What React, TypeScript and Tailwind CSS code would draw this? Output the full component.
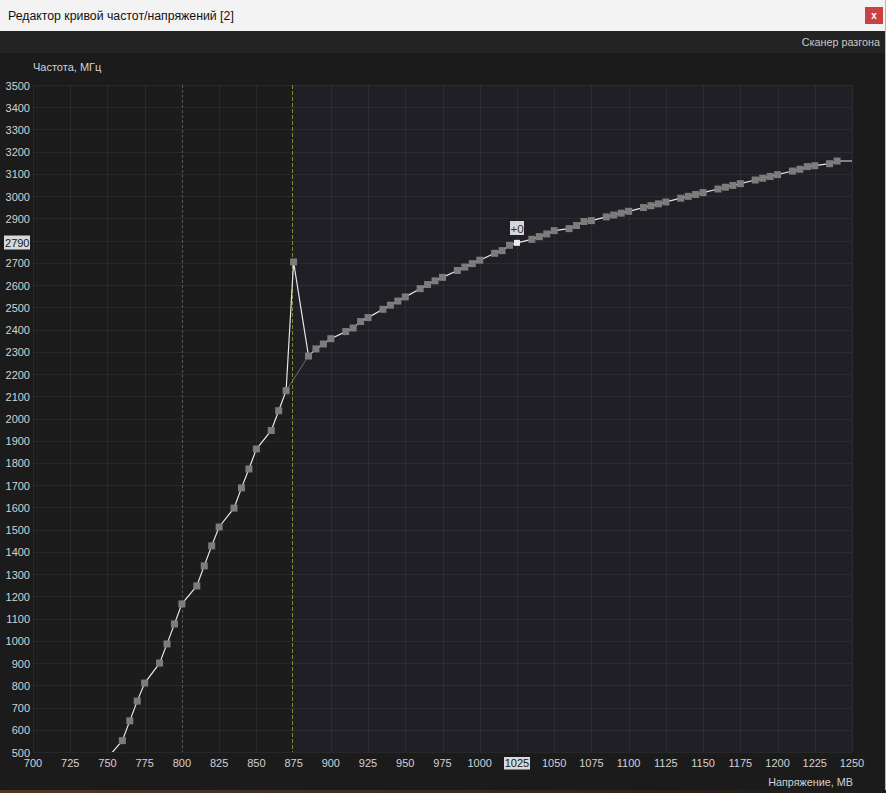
import React from "react";

const X = (v: number) => 33 + (v - 700) * (819 / 550);
const Y = (f: number) => 752 - (f - 500) * (667 / 3000);

const leftPts: [number, number][] = [
  [750, 473],
  [760, 551], [765, 640], [770, 729], [775, 810],
  [785, 900], [790, 986], [795, 1076], [800, 1166],
  [810, 1247], [815, 1337], [820, 1427], [825, 1512],
  [835, 1597], [840, 1688], [845, 1773], [850, 1863],
  [860, 1946], [865, 2035], [870, 2125],
];
const peak: [number, number] = [875, 2704];

const anchors: [number, number][] = [
  [885, 2281], [890, 2313], [895, 2335], [900, 2359], [910, 2391], [915, 2407],
  [920, 2436], [925, 2454], [967, 2610], [1010, 2743], [1015, 2755], [1020, 2779],
  [1025, 2790], [1035, 2806], [1040, 2818], [1045, 2830], [1050, 2845], [1060, 2854],
  [1065, 2868], [1070, 2886], [1075, 2890], [1150, 3016], [1210, 3113], [1215, 3121],
  [1220, 3133], [1225, 3137], [1235, 3146], [1240, 3158],
];

const interp = (v: number) => {
  for (let i = 0; i < anchors.length - 1; i++) {
    const [v0, f0] = anchors[i];
    const [v1, f1] = anchors[i + 1];
    if (v >= v0 && v <= v1) return f0 + ((v - v0) / (v1 - v0)) * (f1 - f0);
  }
  return anchors[anchors.length - 1][1];
};

const rightPts: [number, number][] = [];
for (let v = 885; v <= 1240; v += 5) {
  const m = v % 25;
  if (m === 10 || m === 15 || m === 20 || m === 0) rightPts.push([v, interp(v)]);
}

const all: [number, number][] = [...leftPts, peak, ...rightPts, [1250, 3158]];
const pathD = all.map(([v, f], i) => `${i === 0 ? "M" : "L"}${X(v).toFixed(1)},${Y(f).toFixed(1)}`).join(" ");

const yTicks: number[] = [];
for (let f = 500; f <= 3500; f += 100) yTicks.push(f);
const xTicks: number[] = [];
for (let v = 700; v <= 1250; v += 25) xTicks.push(v);

const px = (n: number) => Math.round(n) + 0.5;

const FONT = "Liberation Sans, Arial, sans-serif";

function Chart() {
  const sq = [...leftPts, peak, ...rightPts];
  return (
    <svg width={885} height={696} viewBox="0 76 885 696" className="block shrink-0" fontFamily={FONT}>
      <defs>
        <clipPath id="plotclip">
          <rect x={33} y={85} width={819} height={667} />
        </clipPath>
      </defs>
      <rect x={33} y={85} width={260} height={667} fill="#1c1c1d" />
      <rect x={293} y={85} width={559} height={667} fill="#1f1f25" />
      {xTicks.filter((v) => v !== 800 && v !== 875).map((v) => (
        <line key={"gx" + v} x1={px(X(v))} x2={px(X(v))} y1={85} y2={752} stroke="#ffffff" strokeOpacity={0.055} />
      ))}
      {yTicks.map((f) => (
        <line key={"gy" + f} x1={33} x2={852} y1={px(Y(f))} y2={px(Y(f))} stroke="#ffffff" strokeOpacity={0.055} />
      ))}
      <line x1={852.5} x2={852.5} y1={85} y2={752} stroke="#2b2b31" />
      <line x1={px(X(800))} x2={px(X(800))} y1={85} y2={752} stroke="#555555" strokeDasharray="3 2" />
      <line x1={292.5} x2={292.5} y1={85} y2={752} stroke="#84842a" strokeDasharray="4 2" shapeRendering="crispEdges" />
      <g clipPath="url(#plotclip)">
        <line x1={X(870)} y1={Y(2125)} x2={X(885)} y2={Y(2281)} stroke="#6e6e6e" strokeWidth={1} />
        <path d={pathD} fill="none" stroke="#e8e8e8" strokeWidth={1.2} />
        {sq.map(([v, f]) =>
          v === 1025 ? null : (
            <rect key={"p" + v} x={X(v) - 3.5} y={Y(f) - 3.5} width={7} height={7} fill="#7c7c7c" />
          )
        )}
        <rect x={X(1025) - 3} y={Y(2790) - 3} width={6} height={6} fill="#ececec" />
      </g>
      <rect x={510} y={221} width={14} height={14} fill="#d6d6d6" />
      <text x={517} y={228.5} fontSize={11.5} fill="#333333" textAnchor="middle" dominantBaseline="central">+0</text>
      {yTicks.filter((f) => f !== 2800).map((f) => (
        <text key={"ly" + f} x={30} y={Y(f) + 0.5} fontSize={11} fill="#d2d2d2" textAnchor="end" dominantBaseline="central">
          {f}
        </text>
      ))}
      <rect x={4} y={235.5} width={26} height={14} fill="#d9d9d9" />
      <text x={29.5} y={Y(2790) + 0.5} fontSize={11} fill="#151515" textAnchor="end" dominantBaseline="central">2790</text>
      {xTicks.map((v) =>
        v === 1025 ? null : (
          <text key={"lx" + v} x={X(v)} y={763} fontSize={11} fill="#d2d2d2" textAnchor="middle" dominantBaseline="central">
            {v}
          </text>
        )
      )}
      <rect x={504} y={757} width={26} height={12.5} fill="#d9d9d9" />
      <text x={517} y={763} fontSize={11} fill="#151515" textAnchor="middle" dominantBaseline="central">1025</text>
    </svg>
  );
}

export default function App() {
  return (
    <div className="w-[886px] h-[793px] flex flex-col bg-[#1a1a1b] overflow-hidden font-['Liberation_Sans',Arial,sans-serif]">
      <div className="h-[790px] flex flex-col border-r border-[#b8b8b8]">
        <div className="h-[31px] shrink-0 bg-[#f3f3f3] flex items-center justify-between pl-[8px] pr-[2px]">
          <span className="text-[12.3px] leading-[16px] text-[#111111]">Редактор кривой частот/напряжений [2]</span>
          <div className="w-[18px] h-[17px] bg-[#c9423f] flex items-center justify-center text-white text-[10px] font-bold leading-none">
            x
          </div>
        </div>
        <div className="h-[22px] shrink-0 bg-[#232323] flex items-center justify-end pr-[5px]">
          <span className="text-[10.8px] leading-[14px] text-[#c8c8c8]">Сканер разгона</span>
        </div>
        <div className="flex-1 flex flex-col bg-[#1b1b1c]">
          <div className="h-[23px] shrink-0 pl-[33px] pt-[7px] text-[11px] leading-[14px] text-[#d2d2d2]">Частота, МГц</div>
          <Chart />
          <div className="h-[18px] shrink-0 flex justify-end pr-[32px] pt-[3px] text-[10.8px] leading-[14px] text-[#d2d2d2]">
            Напряжение, МВ
          </div>
        </div>
      </div>
      <div className="h-[3px] shrink-0 bg-gradient-to-r from-[#4d3727] via-[#3b2b20] to-[#1c1a19]" />
    </div>
  );
}
